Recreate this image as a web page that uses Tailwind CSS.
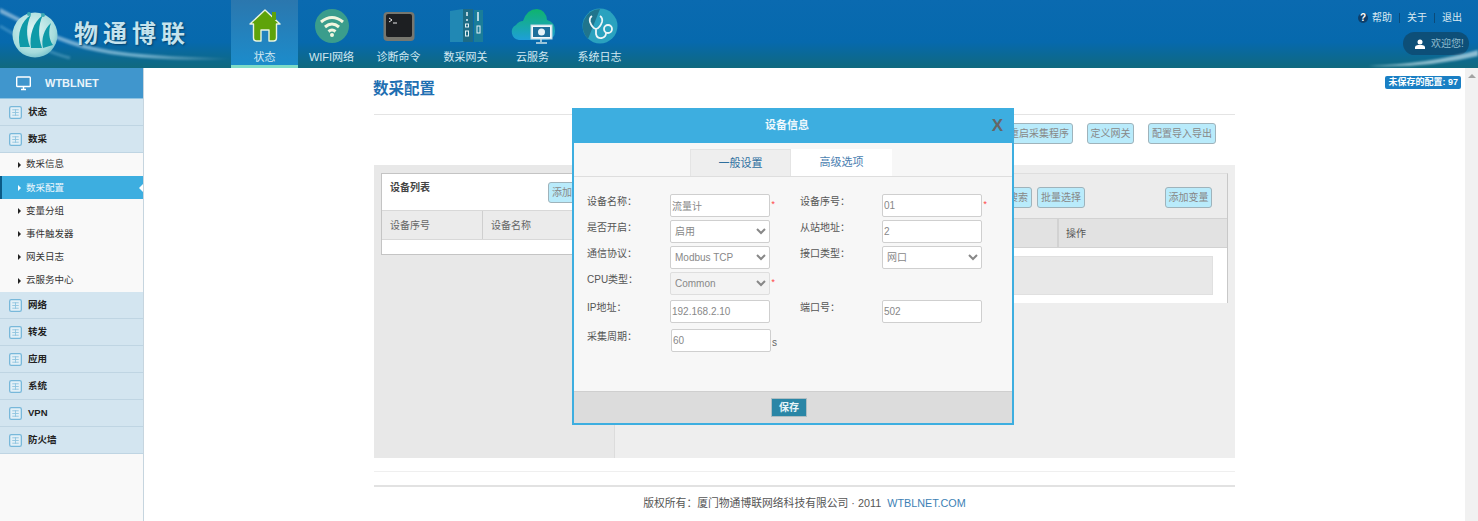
<!DOCTYPE html>
<html lang="zh-CN">
<head>
<meta charset="UTF-8" />
<title>数采配置</title>
<script src="https://cdn.jsdelivr.net/npm/@tailwindcss/browser@4"></script>
</head>
<body class="h-[521px] overflow-hidden bg-white text-[11px] text-[#555] [font-family:'Liberation_Sans','Noto_Sans_CJK_SC',sans-serif]">

<!-- header -->
<header class="relative flex h-[68px] bg-[linear-gradient(180deg,#0a6ab0_0%,#0669ad_62%,#10697e_100%)]">
  <svg class="absolute left-0 top-0 h-[68px] w-[300px]" viewBox="0 0 300 68" fill="none">
    <defs>
      <radialGradient id="ball" cx="0.45" cy="0.4" r="0.7"><stop offset="0" stop-color="#e4f6f6"/><stop offset="0.7" stop-color="#a6dcdc"/><stop offset="1" stop-color="#5fb4c4"/></radialGradient>
      <linearGradient id="streak" x1="0" x2="1"><stop offset="0" stop-color="#fff" stop-opacity="0.45"/><stop offset="0.6" stop-color="#bfe6f7" stop-opacity="0.55"/><stop offset="1" stop-color="#fff" stop-opacity="0"/></linearGradient>
    </defs>
    <path class="blur-[1px]" d="M0 8C40 28 70 46 130 53C170 57 200 57 235 59C190 61 130 60 85 49C50 39 20 22 0 13Z" fill="url(#streak)"/>
    <path class="blur-[1px]" d="M0 26C20 38 45 52 70 58" stroke="#9fd6ef" stroke-opacity="0.3" stroke-width="3"/>
    <circle cx="35" cy="35" r="22.500" fill="url(#ball)"/>
    <path d="M20 47C17 34 21 21 31 15C26 25 26 36 30 47ZM31 48C29 36 33 22 43 15C38 25 38 36 42 48ZM43 48C41 39 44 29 51 23C48 31 49 40 53 45Z" fill="#0f9aa8"/>
    <circle cx="29" cy="14" r="2" fill="#3aa9b5"/><circle cx="43" cy="15" r="2" fill="#3aa9b5"/>
  </svg>
  <div class="relative w-[231px] shrink-0 pl-[74px] pt-[19px] text-[24px] leading-[30px] font-bold tracking-[5px] text-[#c4e3ee] [text-shadow:1px_1px_2px_#063f66]">物通博联</div>
  <nav class="relative flex text-[11px] text-[#d3e8f2]">
    <a class="flex h-[68px] w-[67px] flex-col items-center border-b-[3px] border-[#7fdcc6] bg-[linear-gradient(180deg,#2b77ae,#1c8ccb)] pt-[8px]">
      <svg class="h-[36px] w-[36px]" viewBox="0 0 36 36"><path d="M18 2L33 16L29.500 16V30Q29.500 33 26.500 33H22V22H14V33H9.500Q6.500 33 6.500 30V16H3Z" fill="#5ea30a" stroke="#e8f3e0" stroke-width="1.400" stroke-linejoin="round"/><rect x="25" y="4" width="4" height="8" fill="#5ea30a"/></svg>
      <span class="mt-[6px] leading-[14px]">状态</span>
    </a>
    <a class="flex w-[67px] flex-col items-center pt-[8px]">
      <svg class="h-[36px] w-[36px]" viewBox="0 0 36 36"><circle cx="18" cy="18" r="17" fill="#3a9d8c"/><path d="M7 14Q18 5 29 14M11 19Q18 13 25 19M14.500 23.500Q18 20.500 21.500 23.500" fill="none" stroke="#f1f6df" stroke-width="3"/><circle cx="18" cy="27" r="2" fill="#f1f6df"/></svg>
      <span class="mt-[6px] leading-[14px] whitespace-nowrap">WIFI网络</span>
    </a>
    <a class="flex w-[67px] flex-col items-center pt-[8px]">
      <svg class="h-[36px] w-[36px]" viewBox="0 0 36 36"><rect x="2.500" y="4" width="31" height="29" rx="4" fill="#77776f"/><rect x="5" y="6" width="26" height="23" rx="2" fill="#1d1f22"/><path d="M8 10L11 12L8 14M12 15H16" stroke="#e6e6e6" fill="none"/></svg>
      <span class="mt-[6px] leading-[14px]">诊断命令</span>
    </a>
    <a class="flex w-[67px] flex-col items-center pt-[8px]">
      <svg class="h-[36px] w-[36px]" viewBox="0 0 36 36"><path d="M2 3L15 1V34H2Z" fill="#2188b4"/><rect x="15" y="1" width="10" height="33" fill="#1d6b85"/><rect x="26" y="2" width="9" height="32" fill="#1a7d99"/><path d="M19 4V8M19 11V13M30 4V13" stroke="#e3f1f5" stroke-width="1.500"/><rect x="17.500" y="16" width="3" height="3" fill="none" stroke="#e3f1f5"/><rect x="17.500" y="23" width="3" height="5" fill="none" stroke="#e3f1f5"/><rect x="29" y="18" width="3" height="7" fill="none" stroke="#e3f1f5"/></svg>
      <span class="mt-[6px] leading-[14px]">数采网关</span>
    </a>
    <a class="flex w-[67px] flex-col items-center pt-[8px]">
      <svg class="h-[36px] w-[46px]" viewBox="0 0 46 36">
        <defs><linearGradient id="cloud" x1="0" x2="0" y1="0" y2="1"><stop offset="0" stop-color="#0fb46c"/><stop offset="1" stop-color="#1e9fd8"/></linearGradient></defs>
        <path d="M9 32A8 8 0 0 1 6 17Q9 13 13 13Q17 1 27 1Q36 2 37 12Q45 14 45 23Q45 31 37 32Z" fill="url(#cloud)"/>
        <rect x="21" y="17" width="21" height="14" fill="#f2f8fa" stroke="#b8d3df"/><rect x="23" y="19" width="17" height="10" fill="#1d6f9b"/><circle cx="31.500" cy="24" r="3.500" fill="#e6f3f8"/><path d="M31 31V34M26 35H37" stroke="#c9dfe8" stroke-width="1.500"/>
      </svg>
      <span class="mt-[6px] leading-[14px]">云服务</span>
    </a>
    <a class="flex w-[67px] flex-col items-center pt-[8px]">
      <svg class="h-[36px] w-[36px]" viewBox="0 0 36 36"><circle cx="18" cy="18" r="17.500" fill="#2aa2bf"/><path d="M18 1A17.500 17.500 0 0 0 6 31Z" fill="#20758d"/><path d="M10 8Q7 10 8 14Q10 20 14 21Q18 20 20 14Q21 10 18 8M14 21V26Q15 31 20 30Q24 29 24 25" fill="none" stroke="#eef6f8" stroke-width="1.800"/><circle cx="26" cy="21" r="4" fill="#2aa2bf" stroke="#eef6f8" stroke-width="1.800"/></svg>
      <span class="mt-[6px] leading-[14px]">系统日志</span>
    </a>
  </nav>
  <div class="relative ml-auto flex flex-col items-end pr-[9px] pt-[11px] text-[#d9e9f2]">
    <div class="flex h-[14px] items-center pr-[7px] text-[10px] leading-[14px]">
      <span class="mr-[4px] flex h-[10px] w-[10px] items-center justify-center rounded-full bg-[#0d3f6b] text-[10px] font-bold text-white">?</span>帮助
      <span class="mx-[7px] h-[10px] w-px bg-[#0b4a78]"></span>关于
      <span class="mx-[7px] h-[10px] w-px bg-[#0b4a78]"></span>退出
    </div>
    <div class="mt-[7px] flex h-[23px] w-[66px] items-center rounded-full bg-[#0d4f78] pl-[12px] text-[10px] text-[#8fbccf]">
      <svg class="mr-[6px] h-[10px] w-[10px]" viewBox="0 0 10 10" fill="#fff"><circle cx="5" cy="3" r="2.500"/><path d="M0 10V8Q0 6.500 3 6H7Q10 6.500 10 8V10Z"/></svg>欢迎您!
    </div>
  </div>
  <svg class="absolute right-0 top-[44px] h-[24px] w-[110px]" viewBox="0 0 110 24" fill="none"><path class="blur-[1px]" d="M0 22Q60 20 110 6V12Q60 24 0 22Z" fill="#dff3fa" fill-opacity="0.6"/></svg>
</header>

<div class="flex h-[453px]">
  <!-- sidebar -->
  <aside class="w-[144px] shrink-0 border-r border-[#c6d5df] bg-[#f9f9f9] text-[#222]">
    <div class="flex h-[31px] items-center border-b border-[#8fc3e2] bg-[#4096cd] pl-[16px] text-[11px] font-bold text-[#e9f4fa]">
      <svg class="mr-[14px] h-[15px] w-[15px]" viewBox="0 0 15 15" fill="none"><rect x="0.700" y="1" width="13.600" height="9.500" rx="0.800" stroke="#fff" stroke-width="1.400"/><path d="M5 13.500H10M7.500 11V13" stroke="#fff" stroke-width="1.500"/></svg>WTBLNET
    </div>
    <div class="flex h-[27px] items-center border-b border-[#bfd5e3] bg-[#d3e5f0] pl-[9px] text-[9.500px] font-bold">
      <svg class="mr-[6px] h-[13px] w-[13px]" viewBox="0 0 12 12"><rect x="0.600" y="0.600" width="10.800" height="10.800" rx="1.500" fill="#e3f0f7" stroke="#78b8da" stroke-width="1.200"/><path d="M3 3.500H9M3 6H9M3 8.500H9M6 3V9" stroke="#8cc3df" stroke-width="0.800"/></svg>状态
    </div>
    <div class="flex h-[27px] items-center border-b border-[#bfd5e3] bg-[#d3e5f0] pl-[9px] text-[9.500px] font-bold">
      <svg class="mr-[6px] h-[13px] w-[13px]" viewBox="0 0 12 12"><rect x="0.600" y="0.600" width="10.800" height="10.800" rx="1.500" fill="#e3f0f7" stroke="#78b8da" stroke-width="1.200"/><path d="M3 3.500H9M3 6H9M3 8.500H9M6 3V9" stroke="#8cc3df" stroke-width="0.800"/></svg>数采
    </div>
    <ul class="text-[9.500px] text-[#333]">
      <li class="flex h-[23.200px] items-center pl-[18px]"><span class="mr-[5px] border-y-[3px] border-l-[3px] border-y-transparent border-l-[#222]"></span>数采信息</li>
      <li class="relative flex h-[23.200px] items-center border-l-2 border-[#0b5a85] bg-[#3daee0] pl-[16px] text-[#eef8fd]"><span class="mr-[5px] border-y-[3px] border-l-[3px] border-y-transparent border-l-white"></span>数采配置<span class="absolute right-0 border-y-[4px] border-r-[4px] border-y-transparent border-r-white"></span></li>
      <li class="flex h-[23.200px] items-center pl-[18px]"><span class="mr-[5px] border-y-[3px] border-l-[3px] border-y-transparent border-l-[#222]"></span>变量分组</li>
      <li class="flex h-[23.200px] items-center pl-[18px]"><span class="mr-[5px] border-y-[3px] border-l-[3px] border-y-transparent border-l-[#222]"></span>事件触发器</li>
      <li class="flex h-[23.200px] items-center pl-[18px]"><span class="mr-[5px] border-y-[3px] border-l-[3px] border-y-transparent border-l-[#222]"></span>网关日志</li>
      <li class="flex h-[23.200px] items-center pl-[18px]"><span class="mr-[5px] border-y-[3px] border-l-[3px] border-y-transparent border-l-[#222]"></span>云服务中心</li>
    </ul>
    <div class="flex h-[27px] items-center border-b border-[#bfd5e3] bg-[#d3e5f0] pl-[9px] text-[9.500px] font-bold">
      <svg class="mr-[6px] h-[13px] w-[13px]" viewBox="0 0 12 12"><rect x="0.600" y="0.600" width="10.800" height="10.800" rx="1.500" fill="#e3f0f7" stroke="#78b8da" stroke-width="1.200"/><path d="M3 3.500H9M3 6H9M3 8.500H9M6 3V9" stroke="#8cc3df" stroke-width="0.800"/></svg>网络
    </div>
    <div class="flex h-[27px] items-center border-b border-[#bfd5e3] bg-[#d3e5f0] pl-[9px] text-[9.500px] font-bold">
      <svg class="mr-[6px] h-[13px] w-[13px]" viewBox="0 0 12 12"><rect x="0.600" y="0.600" width="10.800" height="10.800" rx="1.500" fill="#e3f0f7" stroke="#78b8da" stroke-width="1.200"/><path d="M3 3.500H9M3 6H9M3 8.500H9M6 3V9" stroke="#8cc3df" stroke-width="0.800"/></svg>转发
    </div>
    <div class="flex h-[27px] items-center border-b border-[#bfd5e3] bg-[#d3e5f0] pl-[9px] text-[9.500px] font-bold">
      <svg class="mr-[6px] h-[13px] w-[13px]" viewBox="0 0 12 12"><rect x="0.600" y="0.600" width="10.800" height="10.800" rx="1.500" fill="#e3f0f7" stroke="#78b8da" stroke-width="1.200"/><path d="M3 3.500H9M3 6H9M3 8.500H9M6 3V9" stroke="#8cc3df" stroke-width="0.800"/></svg>应用
    </div>
    <div class="flex h-[27px] items-center border-b border-[#bfd5e3] bg-[#d3e5f0] pl-[9px] text-[9.500px] font-bold">
      <svg class="mr-[6px] h-[13px] w-[13px]" viewBox="0 0 12 12"><rect x="0.600" y="0.600" width="10.800" height="10.800" rx="1.500" fill="#e3f0f7" stroke="#78b8da" stroke-width="1.200"/><path d="M3 3.500H9M3 6H9M3 8.500H9M6 3V9" stroke="#8cc3df" stroke-width="0.800"/></svg>系统
    </div>
    <div class="flex h-[27px] items-center border-b border-[#bfd5e3] bg-[#d3e5f0] pl-[9px] text-[9.500px] font-bold">
      <svg class="mr-[6px] h-[13px] w-[13px]" viewBox="0 0 12 12"><rect x="0.600" y="0.600" width="10.800" height="10.800" rx="1.500" fill="#e3f0f7" stroke="#78b8da" stroke-width="1.200"/><path d="M3 3.500H9M3 6H9M3 8.500H9M6 3V9" stroke="#8cc3df" stroke-width="0.800"/></svg>VPN
    </div>
    <div class="flex h-[27px] items-center border-b border-[#bfd5e3] bg-[#d3e5f0] pl-[9px] text-[9.500px] font-bold">
      <svg class="mr-[6px] h-[13px] w-[13px]" viewBox="0 0 12 12"><rect x="0.600" y="0.600" width="10.800" height="10.800" rx="1.500" fill="#e3f0f7" stroke="#78b8da" stroke-width="1.200"/><path d="M3 3.500H9M3 6H9M3 8.500H9M6 3V9" stroke="#8cc3df" stroke-width="0.800"/></svg>防火墙
    </div>
  </aside>

  <!-- content -->
  <main class="relative flex-1 px-[230px]">
    <h1 class="h-[47px] border-b border-[#e4e4e4] pt-[11px] -indent-[1px] text-[15.500px] leading-[20px] font-bold text-[#1f6fb2]">数采配置</h1>
    <div class="flex h-[50px] justify-end gap-[14px] pr-[19px] pt-[8px]">
      <button class="h-[21px] rounded-[3px] border border-[#9fb3bb] bg-[#b9ebfb] px-[3px] text-[10px] text-[#888]">重启采集程序</button>
      <button class="h-[21px] w-[47px] rounded-[3px] border border-[#9fb3bb] bg-[#b9ebfb] text-[10px] text-[#888]">定义网关</button>
      <button class="h-[21px] w-[68px] rounded-[3px] border border-[#9fb3bb] bg-[#b9ebfb] text-[10px] text-[#888]">配置导入导出</button>
    </div>
    <div class="flex h-[293px] bg-[#eeeeee]">
      <section class="w-[241px] shrink-0 border-r border-[#dcdcdc] bg-[#e8e8e8] px-[7px] py-[8px]">
        <div class="h-[82px] border border-[#c4c4c4] bg-white">
          <div class="flex h-[36px] justify-between pl-[8px] pt-[7px] pr-[10px]">
            <b class="text-[10px] leading-[14px] text-[#444]">设备列表</b>
            <button class="mt-[1px] h-[21px] w-[48px] rounded-[3px] border border-[#9fb3bb] bg-[#b9ebfb] text-[10px] text-[#888]">添加设备</button>
          </div>
          <div class="flex h-[30px] items-center border-y border-[#d8d8d8] bg-[#ebebeb] text-[10px] text-[#666]">
            <span class="flex h-full w-[101px] items-center border-r border-[#cfcfcf] pl-[8px]">设备序号</span>
            <span class="pl-[8px]">设备名称</span>
          </div>
        </div>
      </section>
      <section class="flex-1 px-[7px] pt-[8px]">
        <div class="h-[130px] border border-[#c8c8c8] border-t-[#dedede] bg-[#ececec]">
          <div class="flex h-[44px] items-start justify-end pt-[13px] pr-[15px]">
            <button class="h-[21px] w-[28px] rounded-[3px] border border-[#9fb3bb] bg-[#b9ebfb] text-[10px] text-[#888]">搜索</button>
            <button class="ml-[5px] h-[21px] w-[48px] rounded-[3px] border border-[#9fb3bb] bg-[#b9ebfb] text-[10px] text-[#888]">批量选择</button>
            <button class="ml-[80px] h-[21px] w-[47px] rounded-[3px] border border-[#9fb3bb] bg-[#b9ebfb] text-[10px] text-[#888]">添加变量</button>
          </div>
          <div class="flex h-[30px] justify-end border-y border-[#d2d2d2] bg-[#e2e2e2] text-[10px] text-[#555]">
            <span class="flex w-[170px] items-center border-l-2 border-[#d2d2d2] pl-[7px]">操作</span>
          </div>
          <div class="h-[55px] bg-white pr-[14px] pt-[8px]"><div class="h-[39px] border border-[#e0e0e0] bg-[#e8e8e8]"></div></div>
        </div>
      </section>
    </div>
    <div class="mt-[13px] h-[14px] border-t border-[#efefef]"></div>
    <footer class="border-t-2 border-[#e2e2e2] pt-[8px] text-center text-[10.800px] leading-[16px] text-[#555]">版权所有：厦门物通博联网络科技有限公司 · 2011 &nbsp;<span class="text-[#3d7fb5]">WTBLNET.COM</span></footer>

    <span class="absolute right-[4px] top-[8px] rounded-[2px] bg-[#1a7fc4] px-[3px] text-[9px] leading-[13px] font-bold text-white">未保存的配置: 97</span>

    <!-- device dialog -->
    <div class="absolute left-[428px] top-[40px] h-[317px] w-[442px] border-2 border-[#3daee0] bg-[#f7f7f7] text-[10px]">
      <div class="relative -mx-[2px] -mt-[2px] flex h-[35px] items-center justify-center bg-[#3daee0] pr-[12px] text-[11px] font-bold text-[#eef8fd]">
        设备信息<span class="absolute right-[11px] text-[17px] text-[#666]">X</span>
      </div>
      <div class="flex h-[34px] justify-center border-b border-[#dedede] pr-[4px] pt-[6px] text-[11px]">
        <span class="flex w-[101px] items-center justify-center border border-b-0 border-[#e4e4e4] bg-[#eeeeee] text-[#2e6f9e]">一般设置</span>
        <span class="flex w-[101px] items-center justify-center bg-white text-[#4a7eb0]">高级选项</span>
      </div>
      <form class="h-[214px] pl-[13px] pt-[17px] text-[#555]">
        <div class="flex h-[23px] items-start">
          <label class="w-[83px]">设备名称：</label>
          <input class="h-[23px] w-[100px] rounded-[2px] border border-[#cfcfcf] bg-white px-[1px] text-[10px] text-[#888]" value="流量计" />
          <i class="w-[30px] pl-[1px] pt-[4px] text-[9px] text-[#f44]">*</i>
          <label class="w-[82px]">设备序号：</label>
          <input class="h-[23px] w-[100px] rounded-[2px] border border-[#cfcfcf] bg-white px-[1px] text-[10px] text-[#888]" value="01" />
          <i class="pl-[1px] pt-[4px] text-[9px] text-[#f44]">*</i>
        </div>
        <div class="mt-[3px] flex h-[23px] items-start">
          <label class="w-[83px]">是否开启：</label>
          <select class="h-[23px] w-[100px] rounded-[2px] border border-[#cfcfcf] bg-white text-[10px] text-[#888]"><option>启用</option></select>
          <i class="w-[30px]"></i>
          <label class="w-[82px]">从站地址：</label>
          <input class="h-[23px] w-[100px] rounded-[2px] border border-[#cfcfcf] bg-white px-[1px] text-[10px] text-[#888]" value="2" />
        </div>
        <div class="mt-[3px] flex h-[23px] items-start">
          <label class="w-[83px]">通信协议：</label>
          <select class="h-[23px] w-[100px] rounded-[2px] border border-[#cfcfcf] bg-white text-[10px] text-[#888]"><option>Modbus TCP</option></select>
          <i class="w-[30px]"></i>
          <label class="w-[82px]">接口类型：</label>
          <select class="h-[23px] w-[100px] rounded-[2px] border border-[#cfcfcf] bg-white text-[10px] text-[#888]"><option>网口</option></select>
        </div>
        <div class="mt-[3px] flex h-[23px] items-start">
          <label class="w-[83px]">CPU类型：</label>
          <select disabled class="h-[23px] w-[100px] rounded-[2px] border border-[#dedede] bg-[#f3f3f3] text-[10px] text-[#888] opacity-100"><option>Common</option></select>
          <i class="pl-[1px] pt-[4px] text-[9px] text-[#f44]">*</i>
        </div>
        <div class="mt-[5px] flex h-[23px] items-start">
          <label class="w-[83px]">IP地址：</label>
          <input class="h-[23px] w-[100px] rounded-[2px] border border-[#cfcfcf] bg-white px-[1px] text-[10px] text-[#888]" value="192.168.2.10" />
          <i class="w-[30px]"></i>
          <label class="w-[82px]">端口号：</label>
          <input class="h-[23px] w-[100px] rounded-[2px] border border-[#cfcfcf] bg-white px-[1px] text-[10px] text-[#888]" value="502" />
        </div>
        <div class="mt-[6px] flex h-[23px] items-start">
          <label class="w-[84px]">采集周期：</label>
          <input class="h-[23px] w-[100px] rounded-[2px] border border-[#cfcfcf] bg-white px-[1px] text-[10px] text-[#888]" value="60" />
          <span class="self-center pl-[1px] pt-[4px] text-[#666]">s</span>
        </div>
      </form>
      <div class="flex h-[32px] items-start justify-center border-t border-[#cfcfcf] bg-[#dcdcdc] pr-[8px] pt-[6px]">
        <button class="h-[19px] w-[36px] border border-[#aebdc2] bg-[#2a86a6] text-[10px] font-bold text-[#e6f4f8]">保存</button>
      </div>
    </div>
  </main>

  <!-- scrollbar -->
  <div class="flex w-[13px] shrink-0 justify-center bg-[#f1f1f1] pt-[6px]">
    <span class="h-0 border-x-[4px] border-b-[4px] border-x-transparent border-b-[#a3a3a3]"></span>
  </div>
</div>
</body>
</html>
